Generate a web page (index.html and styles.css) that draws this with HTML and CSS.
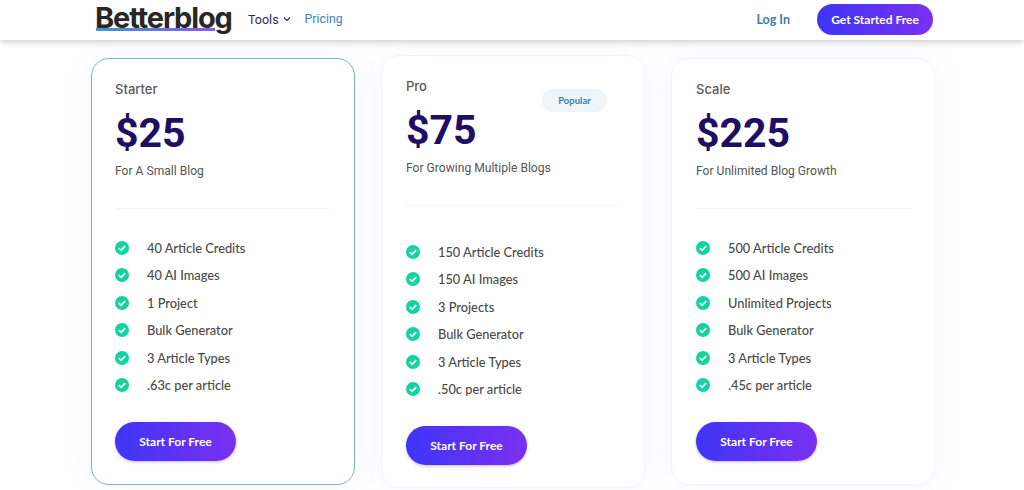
FILE: index.html
```html
<!DOCTYPE html>
<html lang="en">
<head>
<meta charset="utf-8">
<title>Betterblog Pricing</title>
<link rel="stylesheet" href="styles.css">
</head>
<body>
<header class="topbar">
  <a class="logo">Betterblog</a>
  <nav class="nav">
    <a class="nav-tools">Tools
      <svg class="chev" width="8" height="6" viewBox="0 0 8 6"><path d="M1 1.5 4 4.5 7 1.5" fill="none" stroke="#2b2a55" stroke-width="1.2"/></svg>
    </a>
    <a class="nav-pricing">Pricing</a>
  </nav>
  <div class="actions">
    <a class="login">Log In</a>
    <a class="btn-top">Get Started Free</a>
  </div>
</header>
<main class="plans">
  <section class="card card-active">
    <h2 class="plan">Starter</h2>
    <div class="price">$25</div>
    <p class="desc">For A Small Blog</p>
    <hr class="rule">
    <ul class="feats">
      <li><svg class="tick" viewBox="0 0 14 14"><circle cx="7" cy="7" r="7" fill="#13d3a0"/><path d="M3.8 7.2 6.1 9.4 10.2 5.2" fill="none" stroke="#fff" stroke-width="1.7"/></svg>40 Article Credits</li>
      <li><svg class="tick" viewBox="0 0 14 14"><circle cx="7" cy="7" r="7" fill="#13d3a0"/><path d="M3.8 7.2 6.1 9.4 10.2 5.2" fill="none" stroke="#fff" stroke-width="1.7"/></svg>40 AI Images</li>
      <li><svg class="tick" viewBox="0 0 14 14"><circle cx="7" cy="7" r="7" fill="#13d3a0"/><path d="M3.8 7.2 6.1 9.4 10.2 5.2" fill="none" stroke="#fff" stroke-width="1.7"/></svg>1 Project</li>
      <li><svg class="tick" viewBox="0 0 14 14"><circle cx="7" cy="7" r="7" fill="#13d3a0"/><path d="M3.8 7.2 6.1 9.4 10.2 5.2" fill="none" stroke="#fff" stroke-width="1.7"/></svg>Bulk Generator</li>
      <li><svg class="tick" viewBox="0 0 14 14"><circle cx="7" cy="7" r="7" fill="#13d3a0"/><path d="M3.8 7.2 6.1 9.4 10.2 5.2" fill="none" stroke="#fff" stroke-width="1.7"/></svg>3 Article Types</li>
      <li><svg class="tick" viewBox="0 0 14 14"><circle cx="7" cy="7" r="7" fill="#13d3a0"/><path d="M3.8 7.2 6.1 9.4 10.2 5.2" fill="none" stroke="#fff" stroke-width="1.7"/></svg>.63c per article</li>
    </ul>
    <a class="btn-start">Start For Free</a>
  </section>
  <section class="card card-pro">
    <h2 class="plan">Pro</h2>
    <span class="badge">Popular</span>
    <div class="price">$75</div>
    <p class="desc">For Growing Multiple Blogs</p>
    <hr class="rule">
    <ul class="feats">
      <li><svg class="tick" viewBox="0 0 14 14"><circle cx="7" cy="7" r="7" fill="#13d3a0"/><path d="M3.8 7.2 6.1 9.4 10.2 5.2" fill="none" stroke="#fff" stroke-width="1.7"/></svg>150 Article Credits</li>
      <li><svg class="tick" viewBox="0 0 14 14"><circle cx="7" cy="7" r="7" fill="#13d3a0"/><path d="M3.8 7.2 6.1 9.4 10.2 5.2" fill="none" stroke="#fff" stroke-width="1.7"/></svg>150 AI Images</li>
      <li><svg class="tick" viewBox="0 0 14 14"><circle cx="7" cy="7" r="7" fill="#13d3a0"/><path d="M3.8 7.2 6.1 9.4 10.2 5.2" fill="none" stroke="#fff" stroke-width="1.7"/></svg>3 Projects</li>
      <li><svg class="tick" viewBox="0 0 14 14"><circle cx="7" cy="7" r="7" fill="#13d3a0"/><path d="M3.8 7.2 6.1 9.4 10.2 5.2" fill="none" stroke="#fff" stroke-width="1.7"/></svg>Bulk Generator</li>
      <li><svg class="tick" viewBox="0 0 14 14"><circle cx="7" cy="7" r="7" fill="#13d3a0"/><path d="M3.8 7.2 6.1 9.4 10.2 5.2" fill="none" stroke="#fff" stroke-width="1.7"/></svg>3 Article Types</li>
      <li><svg class="tick" viewBox="0 0 14 14"><circle cx="7" cy="7" r="7" fill="#13d3a0"/><path d="M3.8 7.2 6.1 9.4 10.2 5.2" fill="none" stroke="#fff" stroke-width="1.7"/></svg>.50c per article</li>
    </ul>
    <a class="btn-start">Start For Free</a>
  </section>
  <section class="card">
    <h2 class="plan">Scale</h2>
    <div class="price">$225</div>
    <p class="desc">For Unlimited Blog Growth</p>
    <hr class="rule">
    <ul class="feats">
      <li><svg class="tick" viewBox="0 0 14 14"><circle cx="7" cy="7" r="7" fill="#13d3a0"/><path d="M3.8 7.2 6.1 9.4 10.2 5.2" fill="none" stroke="#fff" stroke-width="1.7"/></svg>500 Article Credits</li>
      <li><svg class="tick" viewBox="0 0 14 14"><circle cx="7" cy="7" r="7" fill="#13d3a0"/><path d="M3.8 7.2 6.1 9.4 10.2 5.2" fill="none" stroke="#fff" stroke-width="1.7"/></svg>500 AI Images</li>
      <li><svg class="tick" viewBox="0 0 14 14"><circle cx="7" cy="7" r="7" fill="#13d3a0"/><path d="M3.8 7.2 6.1 9.4 10.2 5.2" fill="none" stroke="#fff" stroke-width="1.7"/></svg>Unlimited Projects</li>
      <li><svg class="tick" viewBox="0 0 14 14"><circle cx="7" cy="7" r="7" fill="#13d3a0"/><path d="M3.8 7.2 6.1 9.4 10.2 5.2" fill="none" stroke="#fff" stroke-width="1.7"/></svg>Bulk Generator</li>
      <li><svg class="tick" viewBox="0 0 14 14"><circle cx="7" cy="7" r="7" fill="#13d3a0"/><path d="M3.8 7.2 6.1 9.4 10.2 5.2" fill="none" stroke="#fff" stroke-width="1.7"/></svg>3 Article Types</li>
      <li><svg class="tick" viewBox="0 0 14 14"><circle cx="7" cy="7" r="7" fill="#13d3a0"/><path d="M3.8 7.2 6.1 9.4 10.2 5.2" fill="none" stroke="#fff" stroke-width="1.7"/></svg>.45c per article</li>
    </ul>
    <a class="btn-start">Start For Free</a>
  </section>
</main>
</body>
</html>
```
FILE: styles.css
```css
* { box-sizing: border-box; }
html, body { margin: 0; height: 490px; overflow: hidden; }
body { background: #fff; font-family: "Roboto", sans-serif; color: #4a4a4a; }

.topbar {
  height: 40px;
  background: #fff;
  box-shadow: 0 2px 7px rgba(0, 0, 0, .2);
  display: flex;
  align-items: center;
  padding: 0 91px 0 95px;
  position: relative;
  z-index: 1;
}
.logo {
  font-family: "Inter", sans-serif;
  font-weight: 700;
  font-size: 29px;
  letter-spacing: -1.15px;
  color: #272727;
  line-height: 34px;
  margin-top: -4px;
  width: 153px;
  background: linear-gradient(90deg, #3f9ad0, #8a58ee) no-repeat 1px 27px / 119px 3px;
}
.nav { display: flex; align-items: center; gap: 14px; margin-top: -2px; }
.nav-tools { color: #2b2a55; font-size: 12.5px; display: flex; align-items: center; gap: 4px; }
.nav-pricing { color: #3d83b2; font-size: 12.3px; }
.actions { margin-left: auto; display: flex; align-items: center; gap: 27px; margin-top: -1px; }
.login { color: #3d7fa8; font-family: "Lato", sans-serif; font-weight: 700; font-size: 12.5px; }
.btn-top {
  width: 116px; height: 31px; border-radius: 16px;
  background: linear-gradient(90deg, #3f35f7, #7a30f0);
  color: #fff; font-family: "Lato", sans-serif; font-weight: 700; font-size: 12px;
  display: flex; align-items: center; justify-content: center;
}

.plans { display: flex; gap: 26px; align-items: center; padding: 15px 0 0 91px; height: 448px; }
.card {
  width: 264px; height: 427px; padding: 22px 24px 0;
  background: #fff;
  border: 1px solid #f1f4f8;
  border-radius: 18px;
  box-shadow: 0 0 30px rgba(110, 130, 230, .07);
  position: relative;
  display: flex; flex-direction: column;
}
.card-active { border-color: #7fb0d3; padding-left: 23px; }
.card-pro { height: 433px; }
.plan { margin: 0; font-family: "Inter", sans-serif; font-weight: 500; font-size: 13px; line-height: 16px; color: #5a5a5a; }
.price { margin-top: 11px; font-weight: 700; font-size: 41px; line-height: 50px; color: #1e0f64; }
.desc { margin: 5px 0 0; font-size: 12.1px; line-height: 16px; color: #555; }
.rule { margin: 29px 0 0; border: 0; border-top: 1px solid #f1f3f6; width: 215px; }
.feats { list-style: none; margin: 29px 0 0; padding: 0; display: flex; flex-direction: column; gap: 7.4px; }
.card-pro .feats { margin-top: 36px; }
.feats li { display: flex; align-items: center; font-family: "Lato", sans-serif; font-weight: 500; font-size: 12.8px; line-height: 20px; color: #4a4a4a; }
.tick { width: 14px; height: 14px; margin-right: 18px; flex: none; }
.btn-start {
  margin-top: 27px;
  width: 121px; height: 39px; border-radius: 20px;
  background: linear-gradient(90deg, #3f35f7, #7a30f0);
  box-shadow: 0 1px 3px rgba(90, 50, 200, .35);
  color: #fff; font-family: "Lato", sans-serif; font-weight: 700; font-size: 12px;
  display: flex; align-items: center; justify-content: center;
}
.badge {
  position: absolute; left: 160px; top: 33px;
  width: 65px; height: 23px; border-radius: 12px;
  background: #eef5fa; color: #3d7fa8;
  font-family: "Lato", sans-serif; font-weight: 700; font-size: 9.5px;
  display: flex; align-items: center; justify-content: center;
}
```
